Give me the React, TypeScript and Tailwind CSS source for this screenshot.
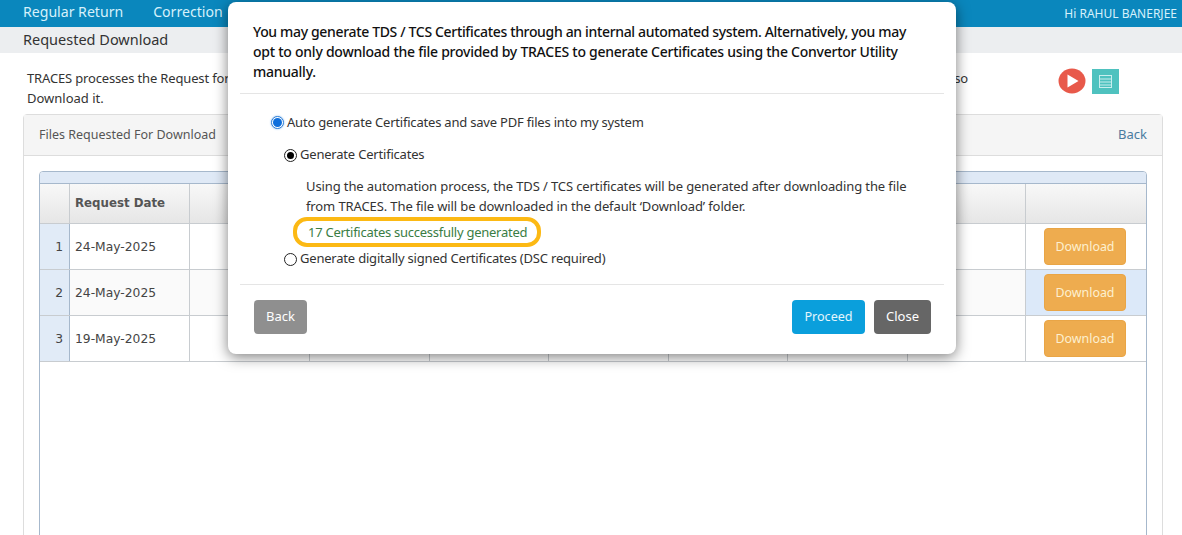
const sans = 'font-["Noto_Sans","Open_Sans",sans-serif]';

const rows = ['24-May-2025', '24-May-2025', '19-May-2025'];
const emptyCols = [120, 120, 119, 120, 119, 120, 118];

function Radio({ kind }: { kind: 'blue' | 'black' | 'off' }) {
  if (kind === 'blue') {
    return (
      <span className="flex h-[13px] w-[13px] shrink-0 -translate-y-[1px] items-center justify-center rounded-full border border-[#2f7fd6] bg-white shadow-[0_0_2px_#7fb2ea]">
        <span className="h-[9px] w-[9px] rounded-full bg-[#0f6fdc]" />
      </span>
    );
  }
  return (
    <span className="flex h-[13px] w-[13px] shrink-0 items-center justify-center rounded-full border border-[#222] bg-white">
      {kind === 'black' && <span className="h-[7px] w-[7px] rounded-full bg-black" />}
    </span>
  );
}

function Grid() {
  return (
    <div className="mx-[15px] mt-[15px] h-[400px] rounded-t-[4px] border border-[#a6b8cc] bg-white">
      <div className="h-[12px] rounded-t-[3px] border-b border-[#a6b8cc] bg-[#dfe9f6]" />
      <div className="flex h-[40px] border-b border-[#c8ccd0] bg-linear-to-b from-[#f8f8f8] to-[#e6e6e6] font-['DejaVu_Sans',sans-serif] text-[11.8px] font-bold text-[#555]">
        <div className="w-[30px] shrink-0 border-r border-[#c8ccd0]" />
        <div className="flex w-[120px] shrink-0 items-center border-r border-[#c8ccd0] pl-[5px]">Request Date</div>
        {emptyCols.map((w, i) => (
          <div key={i} style={{ width: w }} className="shrink-0 border-r border-[#c8ccd0]" />
        ))}
        <div className="flex-1" />
      </div>
      {rows.map((d, i) => (
        <div key={i} className={`flex h-[46px] border-b border-[#c8ccd0] font-['DejaVu_Sans',sans-serif] text-[12.3px] text-[#444] ${i === 1 ? 'bg-[#fafafa]' : 'bg-white'}`}>
          <div className="flex w-[30px] shrink-0 items-center justify-end border-r border-[#a6b8cc] bg-[#e1ebf7] pr-[6px] pt-[2px]">{i + 1}</div>
          <div className="flex w-[120px] shrink-0 items-center border-r border-[#c8ccd0] pl-[5px] pt-[2px]">{d}</div>
          {emptyCols.map((w, j) => (
            <div key={j} style={{ width: w }} className="shrink-0 border-r border-[#c8ccd0]" />
          ))}
          <div className={`flex flex-1 items-center justify-center pr-[2px] ${i === 1 ? 'bg-[#dce9f9]' : ''}`}>
            <button className={`${sans} h-[37px] w-[82px] rounded-[4px] border border-[#e9a546] bg-[#eeac4f] pt-[2px] text-[12.4px] text-[#fdf0d0]`}>
              Download
            </button>
          </div>
        </div>
      ))}
    </div>
  );
}

function Modal() {
  return (
    <div className={`${sans} absolute left-[228px] top-[2px] h-[352px] w-[728px] rounded-[8px] bg-white px-[12px] shadow-[0_3px_14px_rgba(0,0,0,0.5)]`}>
      <div className="h-[92px] whitespace-nowrap border-b border-[#e5e5e5] px-[13px] pt-[20px] text-[14px] font-medium leading-[20px] tracking-[-0.25px] text-[#111]">
        <p className="tracking-[-0.34px]">You may generate TDS / TCS Certificates through an internal automated system. Alternatively, you may</p>
        <p>opt to only download the file provided by TRACES to generate Certificates using the Convertor Utility</p>
        <p>manually.</p>
      </div>
      <div className="h-[191px] whitespace-nowrap border-b border-[#e5e5e5] pt-[19px] text-[13px] tracking-[-0.2px] text-[#333]">
        <div className="ml-[31px] flex h-[20px] items-center gap-[3px]">
          <Radio kind="blue" />
          <span>Auto generate Certificates and save PDF files into my system</span>
        </div>
        <div className="ml-[44px] mt-[12px] flex h-[20px] items-center gap-[3px]">
          <Radio kind="black" />
          <span>Generate Certificates</span>
        </div>
        <div className="ml-[66px] mt-[11px] leading-[20px] tracking-[-0.11px]">
          <p>Using the automation process, the TDS / TCS certificates will be generated after downloading the file</p>
          <p>from TRACES. The file will be downloaded in the default ‘Download’ folder.</p>
        </div>
        <div className="ml-[53px] mt-[1px] flex h-[30px] w-[248px] items-center rounded-[14px] border-[4px] border-[#fcb914] pl-[11px] pt-[1px] tracking-[-0.26px] text-[#3a7d44]">
          17 Certificates successfully generated
        </div>
        <div className="ml-[44px] mt-[2px] flex h-[20px] items-center gap-[3px]">
          <Radio kind="off" />
          <span>Generate digitally signed Certificates (DSC required)</span>
        </div>
      </div>
      <div className="flex items-start pl-[14px] pr-[13px] pt-[15px] text-[13px]">
        <button className="h-[34px] w-[53px] rounded-[4px] bg-[#8f8f8f] text-white">Back</button>
        <button className="ml-auto h-[34px] w-[73px] rounded-[4px] bg-[#0a9fdc] text-[12.6px] text-[#e4f6fd]">Proceed</button>
        <button className="ml-[9px] h-[34px] w-[57px] rounded-[4px] bg-[#666] text-white">Close</button>
      </div>
    </div>
  );
}

export default function App() {
  return (
    <div className={`${sans} relative h-[535px] w-[1182px] overflow-hidden bg-white text-[13px] text-[#333]`}>
      <div className="flex h-[27px] items-center bg-[#0a87bd] pl-[23px] pr-[5px] text-[#d6f1fb]">
        <span className="pb-[4px] text-[14.1px]">Regular Return</span>
        <span className="ml-[30px] pb-[4px] text-[14.1px]">Correction</span>
        <span className="ml-auto text-[12px]">Hi RAHUL BANERJEE</span>
      </div>
      <div className="flex h-[26px] items-center bg-[#eceef0] pl-[23px] text-[14.5px] text-[#333]">Requested Download</div>

      <div className="relative mt-[15px] h-[46px] pl-[27px] leading-[20px]">
        <div className="flex w-[941px] justify-between tracking-[-0.16px]">
          <span>TRACES processes the Request for</span>
          <span>so</span>
        </div>
        <div>Download it.</div>
        <div className="absolute left-[1058px] top-[0px] flex items-center gap-[6px]">
          <svg width="28" height="26" viewBox="0 0 28 26">
            <ellipse cx="14" cy="13" rx="13.5" ry="12.5" fill="#e8594a" />
            <path d="M9.5 6.5 L20.5 13 L9.5 19.5 Z" fill="#fff" />
          </svg>
          <svg width="27" height="25" viewBox="0 0 27 25">
            <rect width="27" height="25" fill="#4fc2bf" />
            <rect x="7.5" y="6.5" width="12" height="12" fill="none" stroke="#c9eeee" />
            <path d="M8 10h11M8 13h11M8 16h11" stroke="#c9eeee" strokeWidth="1" />
          </svg>
        </div>
      </div>

      <div className="ml-[23px] h-[500px] w-[1140px] rounded-t-[4px] border border-[#ddd]">
        <div className="flex h-[41px] items-center justify-between border-b border-[#ddd] bg-[#f5f5f5] px-[15px] text-[12.5px] text-[#555]">
          <span>Files Requested For Download</span>
          <span className="text-[13px] text-[#4a7ba0]">Back</span>
        </div>
        <Grid />
      </div>

      <Modal />
    </div>
  );
}
